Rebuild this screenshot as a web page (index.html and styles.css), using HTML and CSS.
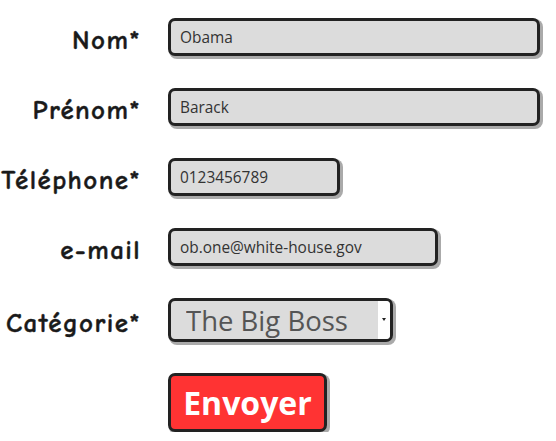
FILE: index.html
```html
<!DOCTYPE html>
<html lang="fr">
<head>
<meta charset="utf-8">
<link rel="stylesheet" href="styles.css">
</head>
<body>
<form class="form">
  <label class="label" for="nom">Nom*</label>
  <input class="field field-long" id="nom" type="text" value="Obama">

  <label class="label" for="prenom">Prénom*</label>
  <input class="field field-long" id="prenom" type="text" value="Barack">

  <label class="label" for="tel">Téléphone*</label>
  <input class="field field-tel" id="tel" type="text" value="0123456789">

  <label class="label" for="mail">e-mail</label>
  <input class="field field-mail" id="mail" type="text" value="ob.one@white-house.gov">

  <label class="label" for="cat">Catégorie*</label>
  <div class="select-wrap">
    <select class="select" id="cat">
      <option>The Big Boss</option>
    </select>
  </div>

  <span></span>
  <button class="submit" type="button">Envoyer</button>
</form>
</body>
</html>
```
FILE: styles.css
```css
html, body {
  margin: 0;
  padding: 0;
  background: #fff;
}

.form {
  display: grid;
  grid-template-columns: 140px auto;
  column-gap: 28px;
  row-gap: 32px;
  align-items: center;
  justify-items: start;
  padding-top: 18px;
}

.label {
  justify-self: end;
  font-family: "Comic Sans MS", "Comic Neue", "DejaVu Sans", sans-serif;
  font-weight: bold;
  font-size: 27px;
  letter-spacing: 1.4px;
  margin-right: -1px;
  color: #1a1a1a;
  white-space: nowrap;
  padding-top: 6px;
  -webkit-text-stroke: 0.4px #1a1a1a;
}

.field {
  box-sizing: border-box;
  height: 38px;
  border: 3px solid #222;
  border-radius: 7px;
  background: #dcdcdc;
  box-shadow: 2px 2px 0 1px #aaa;
  padding: 0 9px;
  font-family: "Open Sans", "DejaVu Sans", sans-serif;
  font-size: 15.4px;
  color: #333;
  outline: none;
}

.field-long { width: 372px; }
.field-tel { width: 172px; }
.field-mail { width: 270px; }

.select-wrap {
  position: relative;
  width: 225px;
  height: 44px;
  box-sizing: border-box;
  border: 3px solid #222;
  border-radius: 7px;
  background: #dcdcdc;
  box-shadow: 2px 2px 0 1px #aaa;
  overflow: hidden;
}

.select-wrap::after {
  content: "";
  position: absolute;
  right: 0;
  top: 0;
  bottom: 0;
  width: 12px;
  background: #fff;
}

.select-wrap::before {
  content: "";
  position: absolute;
  right: 4px;
  top: 17px;
  border-left: 2px solid transparent;
  border-right: 2px solid transparent;
  border-top: 3px solid #222;
  z-index: 1;
}

.select {
  -webkit-appearance: none;
  appearance: none;
  width: 100%;
  height: 100%;
  border: none;
  background: transparent;
  padding: 0 0 0 15px;
  font-family: "Open Sans", "DejaVu Sans", sans-serif;
  font-size: 27.5px;
  color: #555;
  outline: none;
}

.submit {
  width: 159px;
  height: 59px;
  border: 3px solid #222;
  border-radius: 7px;
  background: #f33;
  box-shadow: 2px 2px 0 1px #aaa;
  color: #fff;
  font-family: "Open Sans", "DejaVu Sans", sans-serif;
  font-weight: bold;
  font-size: 32px;
  padding: 0;
  margin-top: -1px;
}
```
